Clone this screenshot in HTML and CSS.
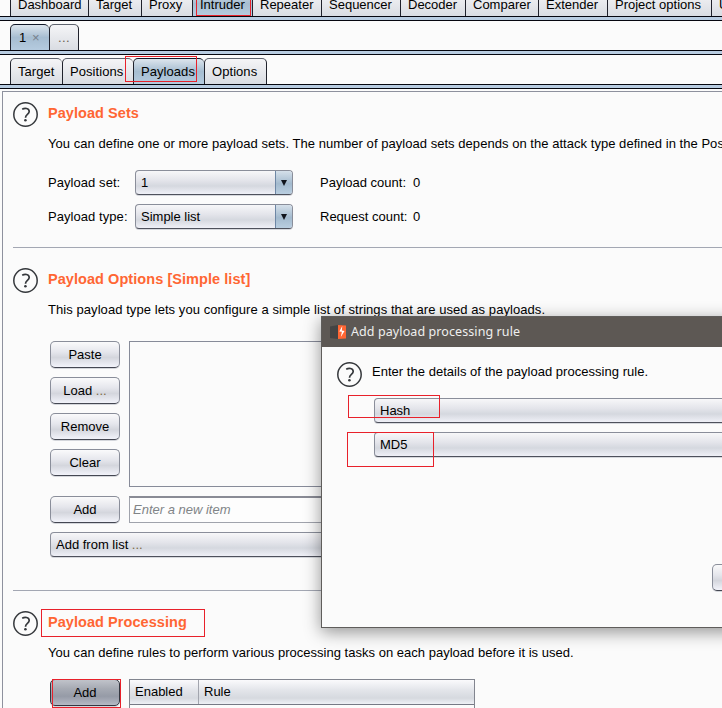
FILE: index.html
```html
<!DOCTYPE html>
<html lang="en">
<head>
<meta charset="utf-8">
<title>Intruder - Payloads</title>
<link rel="stylesheet" href="styles.css">
</head>
<body>
<svg class="defs" width="0" height="0">
  <symbol id="help" viewBox="0 0 25 25">
    <circle cx="12.5" cy="12.5" r="11.700" fill="none" stroke="#35383c" stroke-width="1.500"/>
    <path d="M9.200 7.300C11.500 5.900 16.200 5.800 16.200 9.500c0 2.900-3.700 3-3.700 6.200" fill="none" stroke="#35383c" stroke-width="1.700"/>
    <circle cx="12.400" cy="18.300" r="1.300" fill="#35383c"/>
  </symbol>
</svg>
<div class="window">
  <nav class="tabs top">
    <span class="tab w78">Dashboard</span><span class="tab w53">Target</span><span class="tab w51">Proxy</span><span class="tab active intruder">Intruder</span><span class="tab w69">Repeater</span><span class="tab w79">Sequencer</span><span class="tab w65">Decoder</span><span class="tab w73">Comparer</span><span class="tab w69">Extender</span><span class="tab w104">Project options</span><span class="tab w104">User options</span>
  </nav>
  <div class="band"></div>
  <nav class="tabs attack">
    <span class="tab active num">1 <span class="close">×</span></span><span class="tab more">...</span>
  </nav>
  <div class="band"></div>
  <nav class="tabs sub">
    <span class="tab w52">Target</span><span class="tab w71">Positions</span><span class="tab active w71">Payloads</span><span class="tab end">Options</span>
  </nav>
  <div class="band"></div>

  <main class="panel">
    <section class="section sets">
      <svg class="help"><use href="#help"/></svg>
      <div class="body">
        <h2>Payload Sets</h2>
        <p>You can define one or more payload sets. The number of payload sets depends on the attack type defined in the Positions tab.</p>
        <div class="fields">
          <label>Payload set:</label><div class="combo"><span>1</span><i class="arrow"></i></div><span>Payload count:</span><span>0</span>
          <label>Payload type:</label><div class="combo"><span>Simple list</span><i class="arrow"></i></div><span>Request count:</span><span>0</span>
        </div>
      </div>
    </section>
    <section class="section options">
      <svg class="help"><use href="#help"/></svg>
      <div class="body">
        <h2>Payload Options [Simple list]</h2>
        <p>This payload type lets you configure a simple list of strings that are used as payloads.</p>
        <div class="list-row">
          <div class="buttons">
            <div class="btn">Paste</div><div class="btn">Load <span class="dots">...</span></div><div class="btn">Remove</div><div class="btn">Clear</div>
          </div>
          <div class="listbox"></div>
        </div>
        <div class="add-row"><div class="btn">Add</div><div class="input">Enter a new item</div></div>
        <div class="combo from-list"><div>Add from list <span class="dots">...</span></div></div>
      </div>
    </section>
    <section class="section processing">
      <svg class="help"><use href="#help"/></svg>
      <div class="body">
        <h2>Payload Processing</h2>
        <p>You can define rules to perform various processing tasks on each payload before it is used.</p>
        <div class="rules">
          <div class="btn pressed">Add</div>
          <div class="table"><div class="thead"><span class="col">Enabled</span><span class="col">Rule</span></div></div>
        </div>
      </div>
    </section>
  </main>

  <div class="dialog">
    <header class="titlebar">
      <svg width="16" height="14" viewBox="0 0 16 14"><path d="M0 1.500L8 0v14l-8-1z" fill="#444"/><path d="M8 0l8 .5v13L8 14z" fill="#ff6633"/><path d="M12.300 1L9.300 6.500l2.600.3-1.100 5.200 3.700-6-2.700-.4z" fill="#fff"/></svg>
      <span>Add payload processing rule</span>
    </header>
    <div class="dialog-body">
      <svg class="help"><use href="#help"/></svg>
      <div class="rule-form">
        <p>Enter the details of the payload processing rule.</p>
        <div class="combo"><span>Hash</span></div>
        <div class="combo"><span>MD5</span></div>
      </div>
    </div>
    <div class="btn ok"></div>
  </div>

  <i class="mark m-intruder"></i>
  <i class="mark m-payloads"></i>
  <i class="mark m-hash"></i>
  <i class="mark m-md5"></i>
  <i class="mark m-processing"></i>
  <i class="mark m-add"></i>
</div>
</body>
</html>
```

FILE: styles.css
```css
* { box-sizing: border-box; }
body { margin: 0; font: 13px/16px "Liberation Sans", Arial, sans-serif; color: #000; background: #fbfbfb; overflow: hidden; }
h2, p { margin: 0; }
.defs { position: absolute; }
.window { position: relative; width: 722px; height: 708px; overflow: hidden; display: flex; flex-direction: column; }

/* tab bars */
.tabs { display: flex; flex: none; padding-left: 10px; align-items: flex-end; white-space: nowrap; }
.top { height: 16px; }
.attack, .sub { height: 29px; }
.tab { flex: none; height: 26px; padding: 5px 0 0 7px; border: 1px solid #5d626d; border-width: 1px 0 0 1px; border-left-color: #20222c; border-radius: 5px 5px 0 0; background: linear-gradient(#f5f5f7, #d9dce2); line-height: 15px; letter-spacing: .06px; }
.top .tab { padding-top: 6px; letter-spacing: 0; }
.tab.active { background: linear-gradient(#dde5ed, #a6bdd1 50%, #b5cbdf); border-top-color: #111827; }
.w51 { width: 51px; }
.w52 { width: 52px; }
.w53 { width: 53px; }
.w65 { width: 65px; }
.w69 { width: 69px; }
.w71 { width: 71px; }
.w73 { width: 73px; }
.w78 { width: 78px; }
.w79 { width: 79px; }
.w104 { width: 104px; }
.intruder { width: 60px; }
.num { width: 39px; padding-left: 8px; }
.close { color: #77808b; margin-left: 2px; }
.more { width: 30px; border-right: 1px solid #20222c; padding-left: 8px; letter-spacing: .4px; color: #67604f; }
.end { width: 63px; border-right: 1px solid #20222c; }
.band { flex: none; height: 5px; background: #b8cce1; border: solid #05060f; border-width: 1px 0; }

/* main panel */
.panel { flex: none; height: 640px; margin: 2px 0 0 2px; border: 1px solid #8e919e; border-right: 0; padding-left: 10px; }
.section { display: flex; gap: 10px; border-bottom: 1px solid #a3a7b3; }
.sets { height: 156px; padding-top: 9px; }
.options { height: 343px; padding-top: 19px; }
.processing { height: 160px; padding-top: 19px; border: 0; }
.help { flex: none; width: 25px; height: 25px; margin-top: 1px; }
.body { flex: 1; min-width: 0; padding-top: 3px; white-space: nowrap; }
h2 { font-size: 14.5px; line-height: 18px; letter-spacing: .06px; color: #ff6633; }
.body > p { margin-top: 14px; letter-spacing: .04px; }
.options .body > p { letter-spacing: .065px; }
.processing .body > p { letter-spacing: .016px; }
.fields { display: grid; grid-template-columns: 87px 158px 120px 20px; grid-template-rows: 25px 25px; row-gap: 9px; margin-top: 18px; align-items: center; }
.fields label, .fields > span { padding-top: 1px; }
.fields .combo + span { margin-left: 27px; }
.fields label { letter-spacing: .06px; }
.combo { display: flex; align-items: center; height: 25px; border: 1px solid #8a8e9a; border-bottom-color: #4e515c; border-radius: 4px; background: linear-gradient(#f7f7f9, #e4e5eb 40%, #d5d8df 65%, #eff0f7); box-shadow: 0 1px 0 #d6d8dd; padding-left: 5px; overflow: hidden; }
.combo > span { flex: 1; }
.fields .combo > span { padding-top: 1px; }
.dots { color: #7d6a45; }
.arrow { width: 17px; align-self: stretch; border-left: 1px solid #6e87a5; background: linear-gradient(#d5e0ea, #a3bace 55%, #b9cee0); display: flex; align-items: center; justify-content: center; }
.arrow::before { content: ""; border: solid transparent; border-width: 6px 3.500px 0; border-top-color: #10141c; }
.btn { width: 70px; height: 27px; border: 1px solid #8a8e9a; border-bottom-color: #444752; border-radius: 5px; background: linear-gradient(#fafafb, #e5e6ec 40%, #d4d6dd 62%, #f2f3fa); box-shadow: 0 1px 0 #d4d6db; text-align: center; line-height: 25px; }
.list-row { display: flex; gap: 9px; margin: 23px 0 0 2px; height: 146px; }
.buttons { display: flex; flex-direction: column; gap: 9px; }
.listbox { flex: 1; border: 1px solid #878b99; }
.add-row { display: flex; gap: 9px; margin: 9px 0 0 2px; }
.input { flex: 1; height: 27px; border: 1px solid #a0a3ac; border-top: 2px solid #898b95; padding-left: 3px; line-height: 23px; font-style: italic; color: #808487; background: #fdfdfd; }
.from-list { margin: 9px 0 0 2px; }
.rules { display: flex; gap: 9px; margin: 18px 0 0 2px; }
.pressed { background: linear-gradient(#c0c3ca, #a6aab3 35%, #969ba7 65%, #b5b9c4); border-color: #333640; }
.table { width: 346px; height: 60px; border: 1px solid #82858f; }
.thead { display: flex; height: 25px; border-bottom: 1px solid #767985; background: linear-gradient(#fafafc, #e4e6eb 40%, #d6d9df 75%, #eef0f5); }
.col { padding: 4px 0 0 5px; }
.col:first-child { width: 69px; border-right: 1px solid #a2a5ae; }

/* dialog floating above the window */
.dialog { position: absolute; left: 321px; top: 316px; width: 440px; height: 312px; background: #fbfbfb; border: 1px solid #5f5d5b; box-shadow: 0 4px 16px rgba(0,0,0,.42); }
.titlebar { display: flex; align-items: center; gap: 5px; height: 30px; padding-left: 8px; background: #5d5854; color: #efefee; font-family: "Noto Sans", sans-serif; font-size: 12.500px; letter-spacing: .09px; white-space: nowrap; }
.dialog-body { display: flex; gap: 10px; padding: 14px 0 0 15px; }
.rule-form { flex: 1; padding-top: 3px; }
.rule-form .combo { margin: 9px 0 0 2px; }
.rule-form p { margin-bottom: 18px; letter-spacing: .03px; }
.ok { margin: 107px 0 0 390px; }

/* highlight rectangles */
.mark { position: absolute; border: 1px solid #e8212b; }
.m-intruder { left: 196px; top: -4px; width: 55px; height: 20px; }
.m-payloads { left: 125px; top: 56px; width: 72px; height: 26px; }
.m-hash { left: 348px; top: 395px; width: 92px; height: 23px; }
.m-md5 { left: 347px; top: 432px; width: 87px; height: 35px; }
.m-processing { left: 41px; top: 609px; width: 164px; height: 28px; }
.m-add { left: 52px; top: 679px; width: 69px; height: 29px; }
```
